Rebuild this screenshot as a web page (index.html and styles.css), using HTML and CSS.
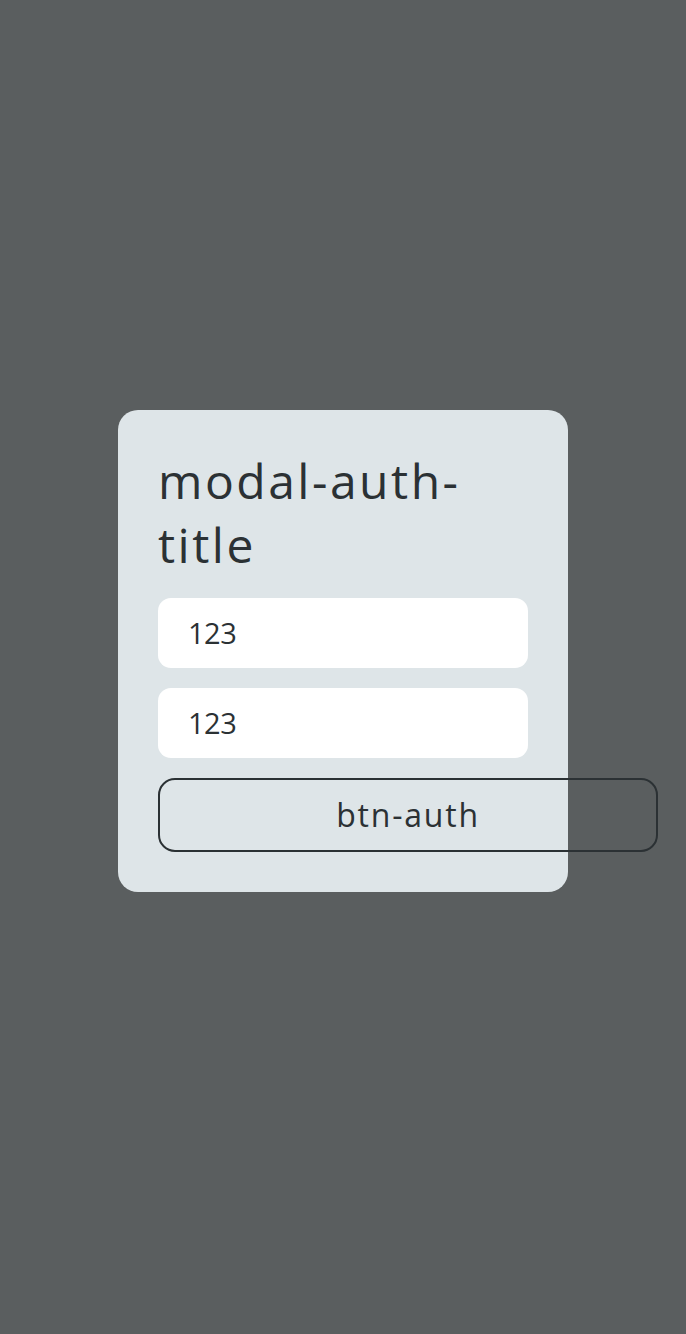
FILE: index.html
```html
<!DOCTYPE html>
<html lang="en">
<head>
<meta charset="utf-8">
<title>modal-auth</title>
<link rel="stylesheet" href="styles.css">
</head>
<body>
<div class="overlay">
  <div class="modal">
    <h1 class="modal-title">modal-auth-<br>title</h1>
    <div class="field">123</div>
    <div class="field">123</div>
    <button class="btn-auth" type="button">btn-auth</button>
  </div>
</div>
</body>
</html>
```

FILE: styles.css
```css
html, body {
  margin: 0;
  padding: 0;
  background: #5a5e5f;
}
.overlay {
  box-sizing: border-box;
  height: 1334px;
  padding-bottom: 33px;
  display: flex;
  align-items: center;
  justify-content: center;
}
.modal {
  box-sizing: border-box;
  width: 450px;
  padding: 40px;
  background: #dee5e8;
  border-radius: 20px;
  display: flex;
  flex-direction: column;
  align-items: flex-start;
  font-family: "Open Sans", "Noto Sans", sans-serif;
  color: #2b3134;
}
.modal-title {
  margin: 0 0 20px;
  font-size: 48px;
  font-weight: 400;
  line-height: 64px;
  letter-spacing: 2.5px;
  position: relative;
  top: -1px;
}
.field {
  box-sizing: border-box;
  width: 370px;
  height: 70px;
  padding: 0 30px;
  margin-bottom: 20px;
  background: #ffffff;
  border-radius: 13px;
  display: flex;
  align-items: center;
  font-size: 29px;
  letter-spacing: -0.5px;
}
.btn-auth {
  box-sizing: border-box;
  width: 500px;
  height: 74px;
  margin: 0;
  padding: 0;
  background: transparent;
  border: 2px solid #2b3134;
  border-radius: 17px;
  font-family: "Open Sans", "Noto Sans", sans-serif;
  font-size: 32px;
  letter-spacing: 1.8px;
  color: #2b3134;
}
```
